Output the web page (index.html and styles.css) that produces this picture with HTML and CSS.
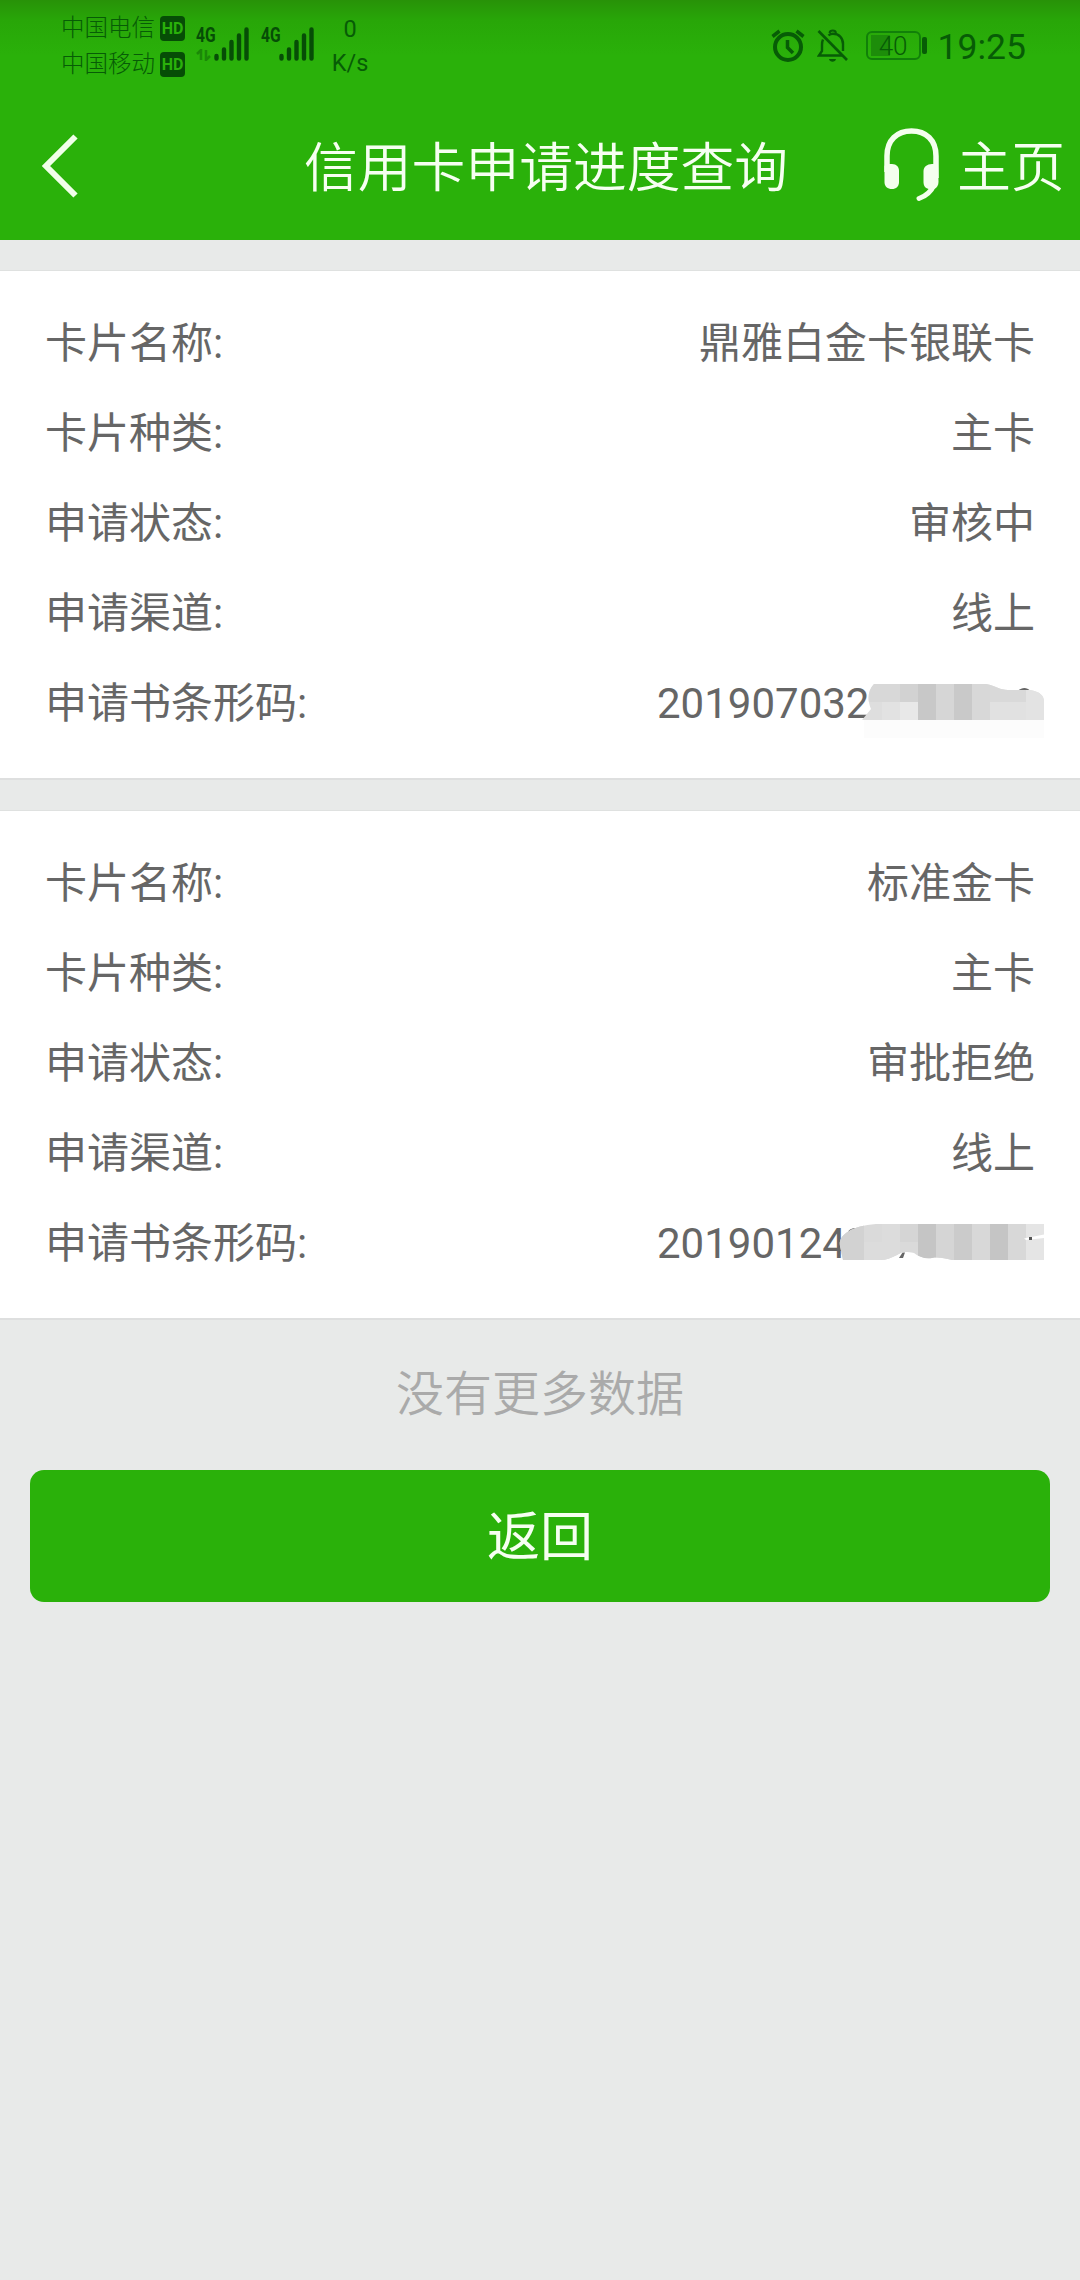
FILE: index.html
```html
<!DOCTYPE html>
<html lang="zh-CN">
<head>
    <meta charset="UTF-8">
    <meta name="viewport" content="width=device-width, initial-scale=1.0">
    <title>信用卡申请进度查询</title>
    <link rel="stylesheet" href="styles.css">
</head>
<body>

    <header class="header">
        <div class="status-bar">
            <div class="carriers">
                <div class="carrier">中国电信<span class="hd">HD</span></div>
                <div class="carrier">中国移动<span class="hd">HD</span></div>
            </div>
            <div class="signal">
                <div class="network">
                    <span class="network-type">4G</span>
                    <svg class="arrows" width="16" height="12" viewBox="0 0 16 12">
                        <path d="M1 5L5 1V11M10 1V11L14 7" fill="none" stroke="currentColor" stroke-width="2.5"/>
                    </svg>
                </div>
                <svg class="bars" width="36" height="34" viewBox="0 0 36 34">
                    <path d="M2.5 29V31.5M10 22.500V31.500M17.500 15V31.500M25 8.500V31.500M32.500 2.500V31.500" stroke="currentColor" stroke-width="4.400" stroke-linecap="round"/>
                </svg>
            </div>
            <div class="signal">
                <div class="network">
                    <span class="network-type">4G</span>
                </div>
                <svg class="bars" width="36" height="34" viewBox="0 0 36 34">
                    <path d="M2.5 29V31.5M10 22.500V31.500M17.500 15V31.500M25 8.500V31.500M32.500 2.500V31.500" stroke="currentColor" stroke-width="4.400" stroke-linecap="round"/>
                </svg>
            </div>
            <div class="speed"><span>0</span><span>K/s</span></div>

            <div class="status-right">
                <svg width="34" height="34" viewBox="0 0 34 34" fill="none" stroke="currentColor">
                    <circle cx="17" cy="18" r="13" stroke-width="4"/>
                    <path d="M16.500 11V18.500L22 24" stroke-width="3.500"/>
                    <path d="M1.500 7.500L8.500 2M25.500 2L32.500 7.500" stroke-width="3.500"/>
                </svg>
                <svg class="bell" width="32" height="34" viewBox="0 0 32 34" fill="none" stroke="currentColor">
                    <path d="M1.500 2L30 31" stroke-width="2.600"/>
                    <path d="M11.500 6.500C13 5 14.500 4.800 16 4.800C22 4.800 26 9 26 15V22M6 10.500C5.300 12 5 14 5 16V22L2 26.500H25" stroke-width="2.400"/>
                    <path d="M12.500 4C13 0.800 18.500 0.800 19 4" stroke-width="2"/>
                    <path d="M12 30H19C18.500 33.500 12.500 33.500 12 30Z" fill="currentColor" stroke="none"/>
                </svg>
                <div class="battery"><span class="battery-level">40</span></div>
                <span class="clock">19:25</span>
            </div>
        </div>

        <div class="nav-bar">
            <a class="back" href="#">
                <svg width="40" height="66" viewBox="0 0 40 66">
                    <path d="M35.500 3.500L6 33L35.500 62.500" fill="none" stroke="#f1ffe9" stroke-width="6"/>
                </svg>
            </a>
            <h1 class="title">信用卡申请进度查询</h1>
            <div class="nav-actions">
                <svg width="56" height="74" viewBox="0 0 56 74">
                    <path d="M3 44V28C3 12 13 3 27.500 3C42 3 52 12 52 28V50" fill="none" stroke="#f4ffee" stroke-width="5.500"/>
                    <path d="M2 36H8C12.500 36 15 39 15 43V54C15 58.500 12 61 8 61C3.500 61 0.500 58.500 0.500 54V38Z" fill="#f4ffee"/>
                    <path d="M54 36H48C43 36 39.500 39 39.500 43V54C39.500 58.500 42 61 46 61H50C53 60 54.500 57 54.500 54Z" fill="#f4ffee"/>
                    <path d="M50 57C47 64 42 68 35 70.500" fill="none" stroke="#f4ffee" stroke-width="5" stroke-linecap="round"/>
                </svg>
                <a class="home" href="#">主页</a>
            </div>
        </div>
    </header>

    <main>
        <section class="card">
            <div class="row"><span>卡片名称:</span><span>鼎雅白金卡银联卡</span></div>
            <div class="row"><span>卡片种类:</span><span>主卡</span></div>
            <div class="row"><span>申请状态:</span><span>审核中</span></div>
            <div class="row"><span>申请渠道:</span><span>线上</span></div>
            <div class="row">
                <span>申请书条形码:</span>
                <span class="barcode">201907032
                    <svg class="mask" width="240" height="80" viewBox="832 670 240 80">
                        <defs>
                            <clipPath id="mask1">
                                <path d="M874 684H986C996 686 1000 690 1008 690H1030C1040 692 1044 695 1044 702V720H862L871 709C867 700 868 690 874 684Z"/>
                            </clipPath>
                        </defs>
                        <path d="M864 720H1044V738H864Z" fill="#fcfcfc"/>
                        <path d="M1018 690.500C1022 687 1027 687 1030 690.500" fill="#666"/>
                        <g clip-path="url(#mask1)">
                            <path d="M860 684H1050V720H860Z" fill="#dedede"/>
                            <path d="M860 684H900V702H860Z" fill="#d8d8d8"/>
                            <path d="M882 702H900V720H882Z" fill="#e2e2e2"/>
                            <path d="M900 684H918V702H900Z" fill="#d2d2d2"/>
                            <path d="M900 702H918V720H900Z" fill="#e8e8e8"/>
                            <path d="M918 684H936V720H918Z" fill="#c8c8c8"/>
                            <path d="M936 684H954V720H936Z" fill="#d6d6d6"/>
                            <path d="M954 684H972V720H954Z" fill="#c9c9c9"/>
                            <path d="M972 684H990V720H972Z" fill="#d8d8d8"/>
                            <path d="M990 684H1026V702H990Z" fill="#d9d9d9"/>
                            <path d="M990 702H1026V720H990Z" fill="#e1e1e1"/>
                            <path d="M1026 684H1044V720H1026Z" fill="#e3e3e3"/>
                        </g>
                    </svg>
                </span>
            </div>
        </section>

        <section class="card">
            <div class="row"><span>卡片名称:</span><span>标准金卡</span></div>
            <div class="row"><span>卡片种类:</span><span>主卡</span></div>
            <div class="row"><span>申请状态:</span><span>审批拒绝</span></div>
            <div class="row"><span>申请渠道:</span><span>线上</span></div>
            <div class="row">
                <span>申请书条形码:</span>
                <span class="barcode">20190124
                    <svg class="mask" width="240" height="80" viewBox="832 1210 240 80">
                        <defs>
                            <clipPath id="mask2">
                                <path d="M840 1246C838 1236 850 1226 876 1224H1044V1260H952C944 1258 938 1257 932 1258C925 1259 919 1257 914 1253C904 1251 902 1252 897 1255C891 1258 886 1260 880 1260H843Z"/>
                            </clipPath>
                        </defs>
                        <path d="M848 1232C850 1227 860 1227 863 1230L863 1236Z" fill="#666"/>
                        <path d="M899 1258L902.500 1252.500H905L903 1258Z" fill="#666"/>
                        <g clip-path="url(#mask2)">
                            <path d="M834 1224H1050V1260H834Z" fill="#dadada"/>
                            <path d="M834 1224H864V1260H834Z" fill="#d2d2d2"/>
                            <path d="M864 1242H900V1260H864Z" fill="#dcdcdc"/>
                            <path d="M882 1224H900V1242H882Z" fill="#dcdcdc"/>
                            <path d="M900 1224H918V1242H900Z" fill="#d5d5d5"/>
                            <path d="M918 1224H936V1260H918Z" fill="#c5c5c5"/>
                            <path d="M936 1224H954V1260H936Z" fill="#d5d5d5"/>
                            <path d="M954 1224H972V1260H954Z" fill="#cbcbcb"/>
                            <path d="M972 1224H990V1260H972Z" fill="#d8d8d8"/>
                            <path d="M990 1224H1008V1260H990Z" fill="#c5c5c5"/>
                            <path d="M1008 1224H1026V1260H1008Z" fill="#d8d8d8"/>
                            <path d="M1026 1224H1044V1260H1026Z" fill="#e5e5e5"/>
                            <path d="M1024 1238.500L1044 1234.500V1238L1026 1240Z" fill="#fff"/>
                            <path d="M1029 1237H1032V1240H1029Z" fill="#555"/>
                        </g>
                    </svg>
                </span>
            </div>
        </section>

        <p class="no-more">没有更多数据</p>
        <button class="return-button">返回</button>
    </main>

</body>
</html>
```
FILE: styles.css
```css
* {
    margin: 0;
    padding: 0;
    box-sizing: border-box;
}

body {
    font-family: Roboto, "Noto Sans CJK SC", sans-serif;
    background-color: #e8eae9;
    color: #666;
    min-height: 100vh;
}

svg {
    display: block;
    flex-shrink: 0;
}

a {
    color: inherit;
    text-decoration: none;
}

.header {
    height: 240px;
    background: linear-gradient(#289208, #28a608 20px, #2ab10a 56px);
}

/* Status bar */
.status-bar {
    display: flex;
    height: 92px;
    padding-left: 61px;
    color: #075c06;
}

.carriers {
    width: 135px;
    padding-top: 10px;
}

.carrier {
    display: flex;
    align-items: center;
    height: 36px;
    font-size: 23.5px;
    font-weight: 300;
    line-height: 36px;
}

.hd {
    width: 25px;
    height: 25px;
    margin-left: 5px;
    border-radius: 4px;
    background-color: #064d06;
    color: #2ab10a;
    font-size: 16px;
    font-weight: 700;
    line-height: 25px;
    text-align: center;
}

.signal {
    display: flex;
    width: 65px;
    padding-top: 27px;
    color: #064d06;
}

.network {
    width: 18px;
}

.network-type {
    display: block;
    font-size: 20px;
    font-weight: 700;
    line-height: 16px;
    transform: scaleX(0.78);
    transform-origin: left;
}

.arrows {
    margin-top: 6px;
    opacity: 0.4;
}

.speed {
    display: flex;
    flex-direction: column;
    align-items: center;
    width: 48px;
    padding-top: 12px;
    font-size: 23.5px;
    line-height: 34px;
}

.status-right {
    display: flex;
    align-items: center;
    height: 91px;
    margin-left: auto;
    padding-right: 54px;
}

.bell {
    margin-left: 12px;
}

.battery {
    position: relative;
    width: 55px;
    height: 29px;
    margin-left: 17px;
    padding: 2px 3px;
    border: 2px solid #118009;
    border-radius: 6px;
}

.battery::after {
    content: "";
    position: absolute;
    top: 4px;
    right: -8px;
    width: 5px;
    height: 17px;
    border-radius: 2px;
    background-color: #075c06;
}

.battery-level {
    display: block;
    height: 21px;
    background: linear-gradient(#1d8d0a, #1d8d0a) no-repeat left / 19px 21px;
    font-size: 26px;
    font-weight: 300;
    line-height: 22px;
    text-align: center;
}

.clock {
    margin-left: 17px;
    padding-top: 2px;
    font-size: 35.5px;
}

/* Navigation bar */
.nav-bar {
    display: grid;
    grid-template-columns: 304px 1fr 275px;
    align-items: center;
    height: 148px;
    color: #f6fff1;
    font-size: 54px;
    line-height: 80px;
}

.back {
    margin-left: 40px;
}

.title {
    padding-top: 5px;
    font-size: 53.8px;
    font-weight: 350;
    white-space: nowrap;
}

.nav-actions {
    display: flex;
    align-items: center;
    justify-content: flex-end;
    gap: 17px;
    padding-right: 15px;
}

.nav-actions svg {
    margin-top: -2px;
}

.home {
    padding-top: 5px;
    font-weight: 350;
}

/* Application cards */
.card {
    margin-top: 30px;
    padding: 28px 45px 29px 45px;
    border-top: 1px solid #dfe1e0;
    border-bottom: 2px solid #dedfdf;
    background-color: #fff;
}

.row {
    display: flex;
    align-items: center;
    justify-content: space-between;
    height: 90px;
    font-size: 42px;
    line-height: 60px;
}

.barcode {
    position: relative;
    width: 378px;
}

.mask {
    position: absolute;
    top: -4px;
    left: 175px;
}

.no-more {
    margin-top: 39px;
    color: #aaa;
    font-size: 48px;
    font-weight: 350;
    line-height: 72px;
    text-align: center;
}

.return-button {
    display: block;
    width: 1020px;
    height: 132px;
    margin: 39px auto 0;
    padding-bottom: 6px;
    border: none;
    border-radius: 14px;
    background-color: #2ab10a;
    color: #f6fff1;
    font-family: inherit;
    font-size: 53px;
    font-weight: 400;
}
```
